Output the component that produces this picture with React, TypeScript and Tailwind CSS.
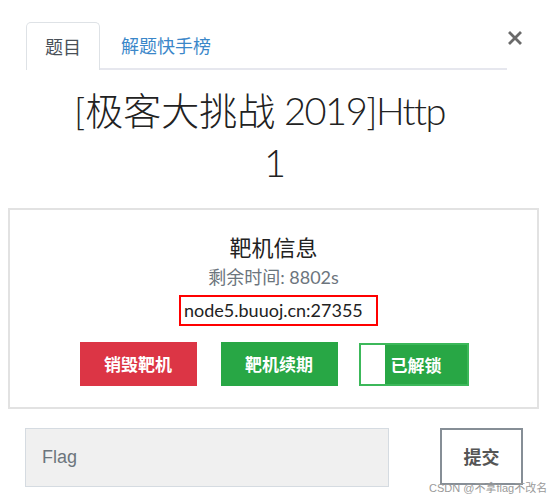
import React from "react";

const latin = { fontFamily: '"Lato", "Noto Sans CJK SC", sans-serif' };
const cjk = { fontFamily: '"Noto Sans CJK SC", "Lato", sans-serif' };

export default function App() {
  return (
    <div
      className="relative w-[553px] h-[500px] bg-white overflow-hidden"
      style={latin}
    >
      {/* Header: tabs + close */}
      <div className="flex pt-[22px] pl-[26px]">
        <div className="flex w-[481px] h-[48px] border-b-2 border-[#e6e7ee]">
          <div
            className="h-[48px] w-[74px] flex items-center justify-center border border-b-0 border-[#dee2e6] rounded-t-[5px] bg-white text-[18px] text-[#495057]"
            style={cjk}
          >
            题目
          </div>
          <div
            className="h-[46px] flex items-center pl-[21px] text-[18px] text-[#3a87c9]"
            style={cjk}
          >
            解题快手榜
          </div>
        </div>
        <div className="pt-[9px] pl-[1px]">
          <svg width="14" height="14" viewBox="0 0 14 14">
            <path
              d="M2 2 L12 12 M12 2 L2 12"
              stroke="#6a6a6a"
              strokeWidth="2.8"
              strokeLinecap="square"
            />
          </svg>
        </div>
      </div>

      {/* Title */}
      <div className="mt-[14px] pl-[26px] w-[507px] text-center text-[38px] leading-[52px] text-[#222] font-light">
        <div className="pr-[14px]">
          [极客大挑战<span className="tracking-[-1.5px]"> 2019]Http</span>
        </div>
        <div className="pl-[17px]">1</div>
      </div>

      {/* Card */}
      <div className="mt-[20px] ml-[8px] w-[531px] border-2 border-[#e2e2e2] flex flex-col items-center pt-[21px] pb-[21px]">
        <div className="text-[22px] leading-[30px] text-[#222]" style={cjk}>
          靶机信息
        </div>
        <div className="mt-[4px] text-[18px] leading-[24px] text-[#6c757d]">
          剩余时间: 8802s
        </div>
        <div className="mt-[6px] ml-[10px] h-[31px] w-[199px] border-2 border-[#ff0000] flex items-center pl-[3px] text-[18px] text-[#222]">
          node5.buuoj.cn:27355
        </div>
        <div className="mt-[16px] flex pl-[1px]">
          <div
            className="w-[117px] h-[44px] bg-[#dc3545] flex items-center justify-center text-white font-bold text-[17px]"
            style={cjk}
          >
            销毁靶机
          </div>
          <div
            className="ml-[24px] w-[117px] h-[44px] bg-[#28a745] flex items-center justify-center text-white font-bold text-[17px]"
            style={cjk}
          >
            靶机续期
          </div>
          <div className="ml-[21px] w-[110px] h-[43px] mt-[1px] border-2 border-[#3cb85a] flex">
            <div className="w-[24px] h-full bg-white" />
            <div
              className="flex-1 h-full bg-[#28a745] flex items-center pl-[6px] text-white font-bold text-[17px]"
              style={cjk}
            >
              已解锁
            </div>
          </div>
        </div>
      </div>

      {/* Flag row */}
      <div className="mt-[19px] flex items-start pl-[25px]">
        <div
          className="w-[364px] h-[59px] bg-[#f0f0f0] border border-[#d5dbe1] flex items-center pl-[16px] text-[18px] text-[#6c757d]"
          style={{ fontFamily: '"Liberation Sans", Arial, sans-serif' }}
        >
          Flag
        </div>
        <div
          className="ml-[51px] w-[83px] h-[57px] border-2 border-[#868e96] bg-white flex items-center justify-center text-[18px] font-bold text-[#555]"
          style={cjk}
        >
          提交
        </div>
      </div>

      {/* Watermark */}
      <div
        className="absolute left-[429px] top-[482px] text-[11px] leading-[13px] text-[#9a9a9a] whitespace-nowrap"
        style={{ fontFamily: '"Liberation Sans", "Noto Sans CJK SC", sans-serif' }}
      >
        CSDN @不拿flag不改名
      </div>
    </div>
  );
}
